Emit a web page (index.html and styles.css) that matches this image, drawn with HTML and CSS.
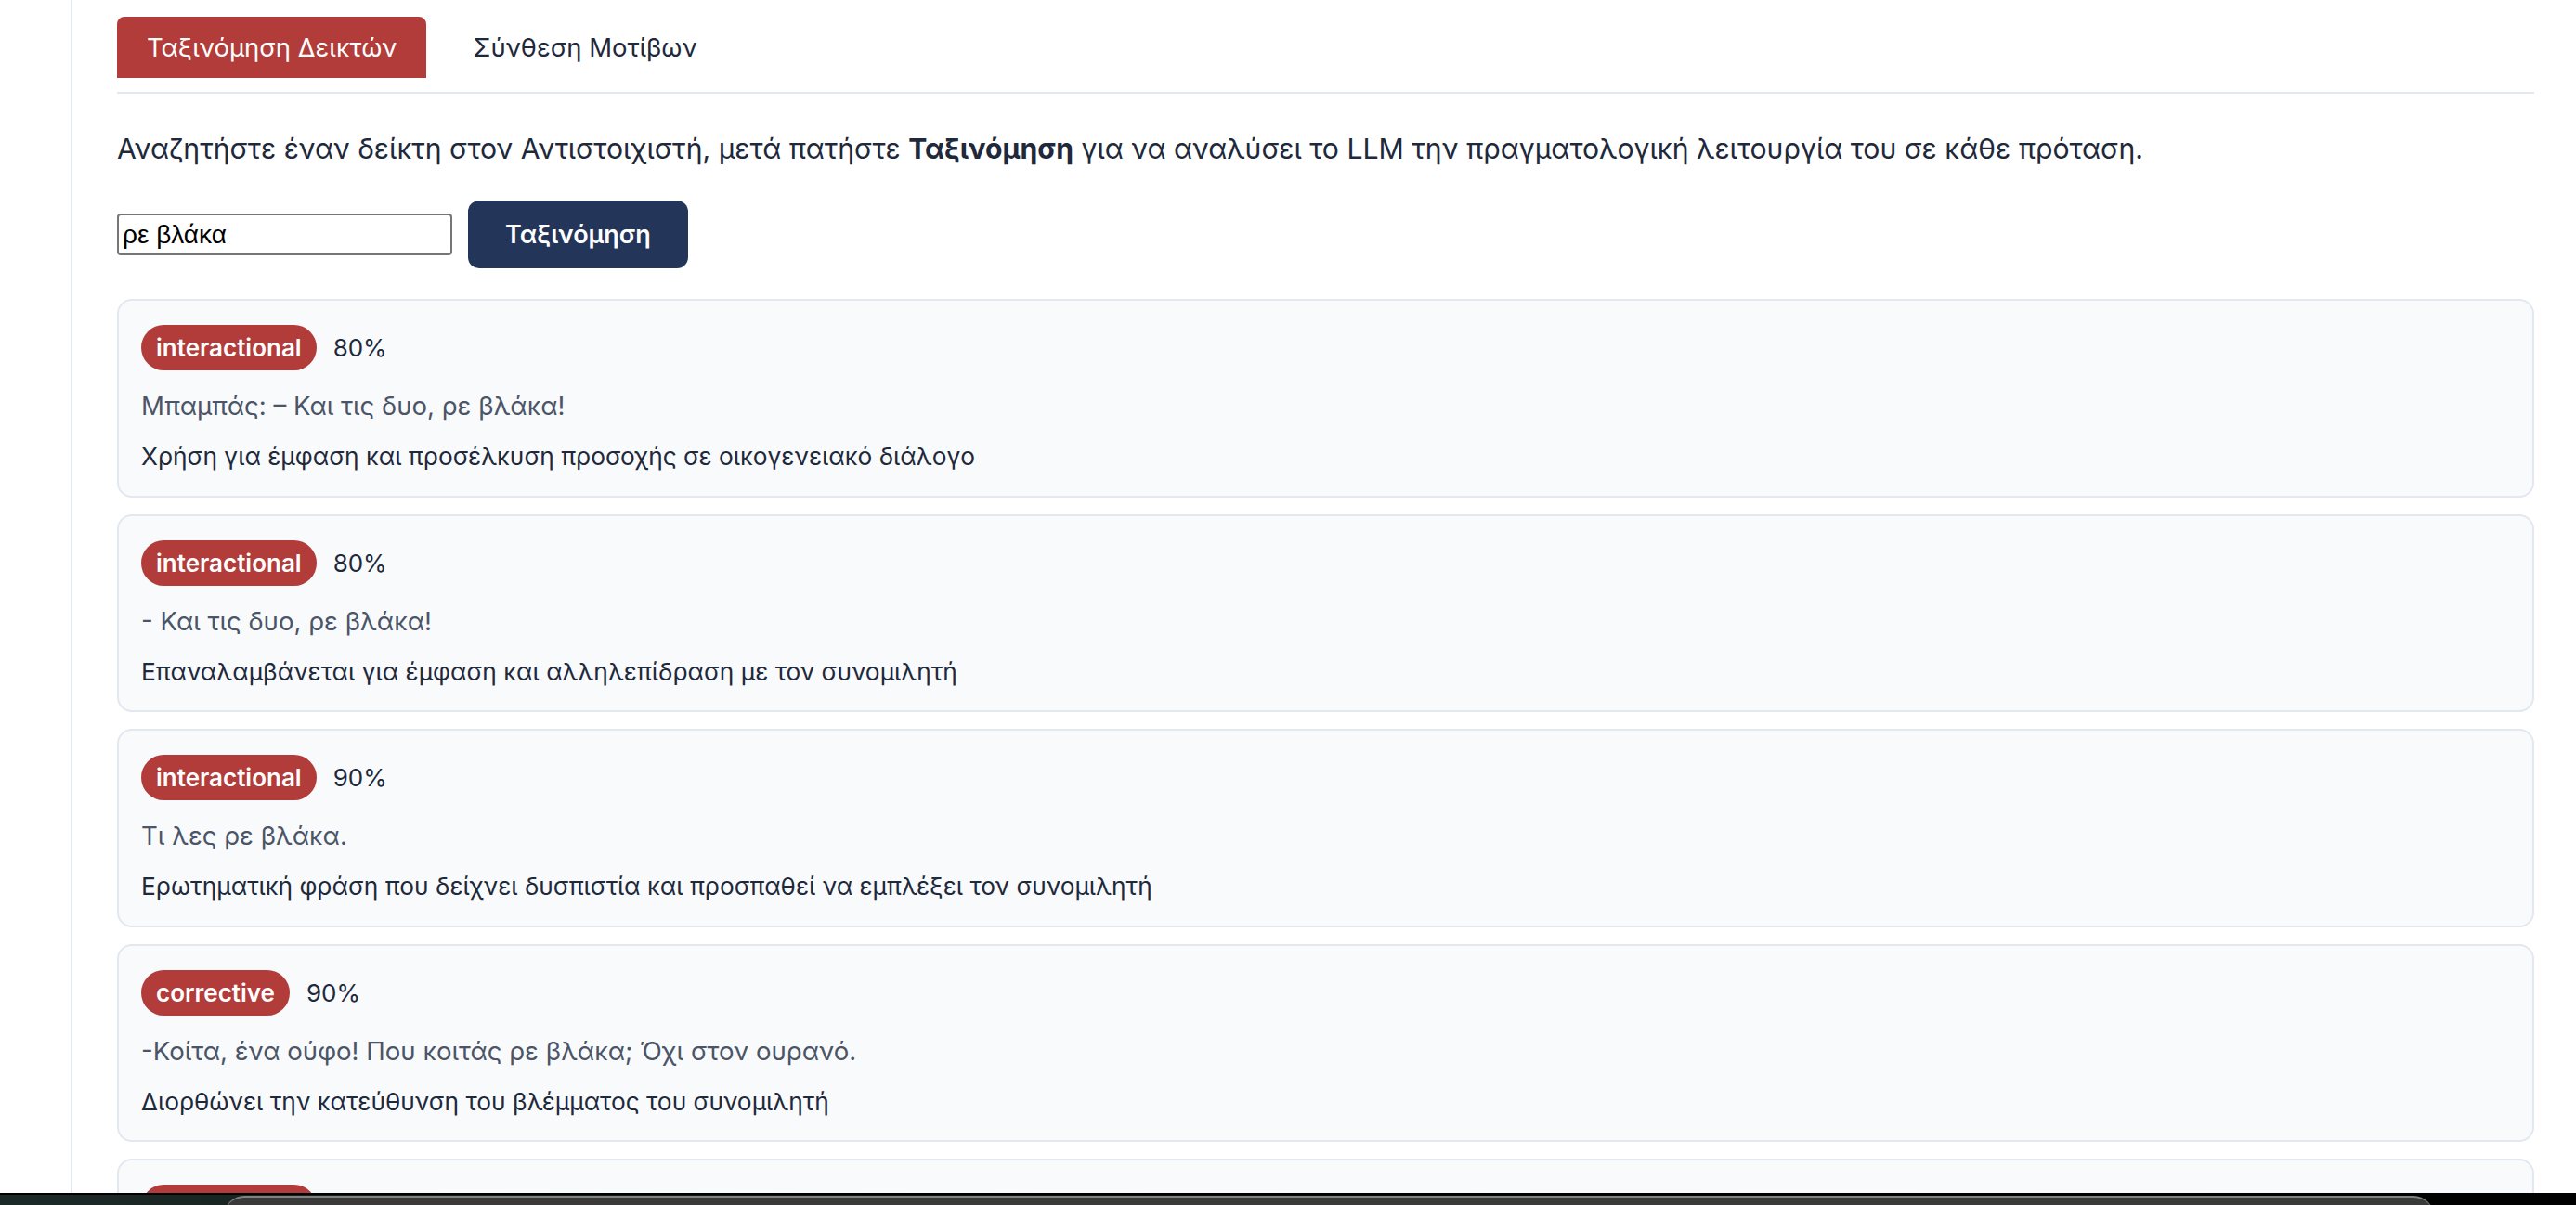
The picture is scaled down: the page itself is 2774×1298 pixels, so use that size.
FILE: index.html
```html
<!DOCTYPE html>
<html lang="el">
<head>
    <meta charset="UTF-8">
    <meta name="viewport" content="width=device-width, initial-scale=1.0">
    <title>Ταξινόμηση Δεικτών</title>
    <link rel="stylesheet" href="styles.css">
</head>
<body>
    <div class="layout">
        <!-- Sidebar rail -->
        <aside class="sidebar"></aside>

        <main class="main">
            <!-- Tabs -->
            <nav class="tabs">
                <button class="tab active">Ταξινόμηση Δεικτών</button>
                <button class="tab">Σύνθεση Μοτίβων</button>
            </nav>

            <p class="intro">Αναζητήστε έναν δείκτη στον Αντιστοιχιστή, μετά πατήστε <strong>Ταξινόμηση</strong> για να αναλύσει το LLM την πραγματολογική λειτουργία του σε κάθε πρόταση.</p>

            <div class="search">
                <input type="text" class="search-input" value="ρε βλάκα">
                <button class="btn-primary">Ταξινόμηση</button>
            </div>

            <!-- Classification results -->
            <div class="results">
                <div class="result">
                    <div class="result-head">
                        <span class="badge">interactional</span>
                        <span class="score">80%</span>
                    </div>
                    <p class="sentence">Μπαμπάς: – Και τις δυο, ρε βλάκα!</p>
                    <p class="reason">Χρήση για έμφαση και προσέλκυση προσοχής σε οικογενειακό διάλογο</p>
                </div>

                <div class="result">
                    <div class="result-head">
                        <span class="badge">interactional</span>
                        <span class="score">80%</span>
                    </div>
                    <p class="sentence">- Και τις δυο, ρε βλάκα!</p>
                    <p class="reason">Επαναλαμβάνεται για έμφαση και αλληλεπίδραση με τον συνομιλητή</p>
                </div>

                <div class="result">
                    <div class="result-head">
                        <span class="badge">interactional</span>
                        <span class="score">90%</span>
                    </div>
                    <p class="sentence">Τι λες ρε βλάκα.</p>
                    <p class="reason">Ερωτηματική φράση που δείχνει δυσπιστία και προσπαθεί να εμπλέξει τον συνομιλητή</p>
                </div>

                <div class="result">
                    <div class="result-head">
                        <span class="badge">corrective</span>
                        <span class="score">90%</span>
                    </div>
                    <p class="sentence">-Κοίτα, ένα ούφο! Που κοιτάς ρε βλάκα; Όχι στον ουρανό.</p>
                    <p class="reason">Διορθώνει την κατεύθυνση του βλέμματος του συνομιλητή</p>
                </div>

                <div class="result">
                    <div class="result-head">
                        <span class="badge">interactional</span>
                        <span class="score">80%</span>
                    </div>
                    <p class="sentence">Άντε ρε βλάκα, πάμε!</p>
                    <p class="reason">Παρότρυνση προς τον συνομιλητή</p>
                </div>
            </div>
        </main>
    </div>

    <!-- Desktop dock peeking under the window -->
    <div class="dock">
        <div class="dock-window"></div>
    </div>
</body>
</html>
```

FILE: styles.css
```css
/* General Styles */
body {
    font-family: Inter, "Noto Sans", sans-serif;
    margin: 0;
    padding: 0;
    background: #ffffff;
    color: #1e293b;
    overflow: hidden;
}

.layout {
    display: flex;
    min-height: 100vh;
}

/* Sidebar */
.sidebar {
    width: 76px;
    flex-shrink: 0;
    border-right: 2px solid #e2e8f0;
}

.main {
    flex: 1;
    padding: 18px 45px 0 48px;
}

/* Tabs */
.tabs {
    display: flex;
    gap: 18px;
    padding-bottom: 15px;
    border-bottom: 2px solid #e2e8f0;
}

.tab {
    font-family: inherit;
    font-size: 27.5px;
    line-height: 36px;
    padding: 15px 32px;
    border: none;
    border-radius: 8px 8px 0 0;
    background: transparent;
    color: #1e293b;
}

.tab.active {
    background: #b23c3a;
    color: #ffffff;
}

/* Intro text */
.intro {
    font-size: 30.2px;
    line-height: 45px;
    margin: 37px 0 33px;
    color: #1e293b;
}

.intro strong {
    font-weight: 700;
}

/* Search row */
.search {
    display: flex;
    align-items: center;
    gap: 17px;
}

.search-input {
    width: 361px;
    height: 45px;
    box-sizing: border-box;
    padding: 0 4px;
    border: 2px solid #767676;
    border-radius: 4px;
    font-family: "Liberation Sans", Arial, sans-serif;
    font-size: 28px;
    color: #000000;
}

.btn-primary {
    font-family: inherit;
    font-size: 27px;
    font-weight: 600;
    height: 73px;
    padding: 0 40px;
    border: none;
    border-radius: 12px;
    background: #233559;
    color: #ffffff;
}

/* Results */
.results {
    display: flex;
    flex-direction: column;
    gap: 18px;
    margin-top: 33px;
}

.result {
    background: #f8fafc;
    border: 2px solid #e2e8f0;
    border-radius: 16px;
    padding: 26px 24px 22px;
}

.result-head {
    display: flex;
    align-items: center;
    gap: 18px;
}

.badge {
    background: #b23c3a;
    color: #ffffff;
    font-size: 26px;
    font-weight: 600;
    line-height: 49px;
    padding: 0 16px;
    border-radius: 25px;
}

.score {
    font-size: 26px;
    color: #1e293b;
}

.sentence {
    font-size: 27.6px;
    line-height: 42px;
    margin: 17px 0 14px;
    color: #4b5567;
}

.reason {
    font-size: 26.3px;
    line-height: 39.5px;
    margin: 0;
    color: #1e293b;
}

/* Dock strip along the bottom edge */
.dock {
    position: fixed;
    left: 0;
    right: 0;
    bottom: 0;
    height: 11px;
    border-top: 2px solid #000000;
    background: linear-gradient(90deg, #1c2a27 0%, #121b19 25%, #050606 60%, #000000 100%);
}

.dock-window {
    margin: 1px 0 0 241px;
    width: 2380px;
    height: 20px;
    background: #3a3a3a;
    border-top: 2px solid #7f837f;
    border-radius: 22px 22px 0 0;
}
```
